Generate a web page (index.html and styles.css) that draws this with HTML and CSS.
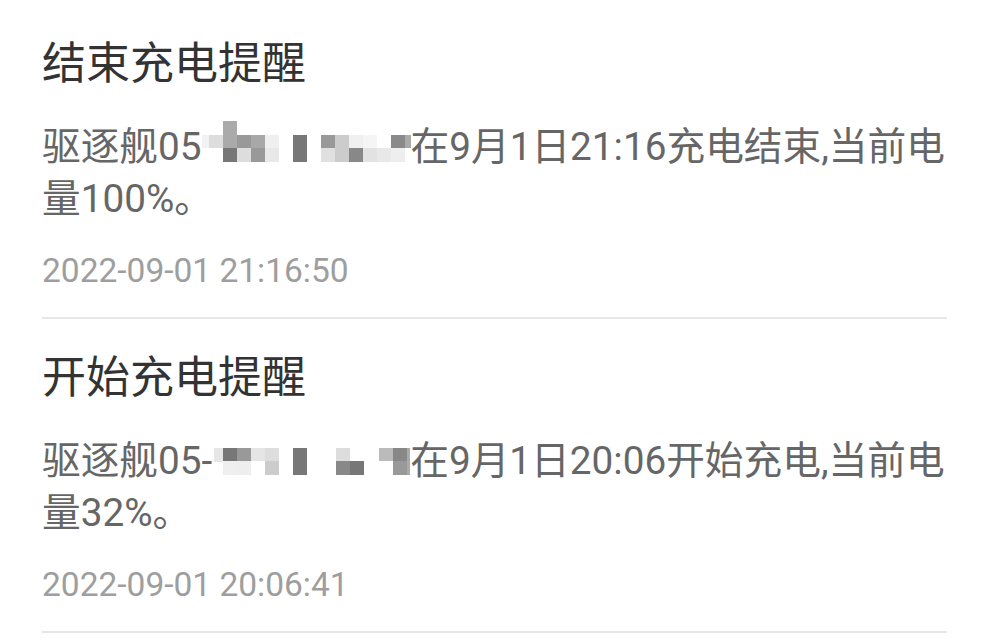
FILE: index.html
```html
<!DOCTYPE html>
<html lang="zh-CN">
<head>
<meta charset="utf-8">
<title>消息</title>
<link rel="stylesheet" href="styles.css">
</head>
<body>
<ul class="list">
  <li class="item">
    <div class="title">结束充电提醒</div>
    <div class="body">驱逐舰05<svg class="mosaic m1" width="209" height="52" viewBox="0 0 209 52" aria-hidden="true">
        <rect x="21" y="0" width="14" height="14" fill="#aaaaaa"/>
        <rect x="0" y="14" width="7" height="13" fill="#f2f2f2"/>
        <rect x="7" y="14" width="14" height="13" fill="#dddddd"/>
        <rect x="21" y="14" width="14" height="13" fill="#aaaaaa"/>
        <rect x="35" y="14" width="14" height="13" fill="#999999"/>
        <rect x="49" y="14" width="14" height="13" fill="#a8a8a8"/>
        <rect x="63" y="14" width="14" height="13" fill="#efefef"/>
        <rect x="91" y="14" width="14" height="13" fill="#777777"/>
        <rect x="119" y="14" width="14" height="13" fill="#999999"/>
        <rect x="133" y="14" width="14" height="13" fill="#cccccc"/>
        <rect x="147" y="14" width="14" height="13" fill="#f0f0f0"/>
        <rect x="161" y="14" width="14" height="13" fill="#f5f5f5"/>
        <rect x="189" y="14" width="14" height="13" fill="#8a8a8a"/>
        <rect x="203" y="14" width="6" height="13" fill="#aaaaaa"/>
        <rect x="21" y="27" width="14" height="14" fill="#777777"/>
        <rect x="35" y="27" width="14" height="14" fill="#dddddd"/>
        <rect x="49" y="27" width="14" height="14" fill="#999999"/>
        <rect x="63" y="27" width="14" height="14" fill="#e8e8e8"/>
        <rect x="91" y="27" width="14" height="14" fill="#777777"/>
        <rect x="119" y="27" width="14" height="14" fill="#e0e0e0"/>
        <rect x="133" y="27" width="14" height="14" fill="#cccccc"/>
        <rect x="147" y="27" width="14" height="14" fill="#888888"/>
        <rect x="161" y="27" width="14" height="14" fill="#e2e2e2"/>
        <rect x="175" y="27" width="14" height="14" fill="#e8e8e8"/>
        <rect x="189" y="27" width="14" height="14" fill="#eeeeee"/>
      </svg>在9月1日21:16充电结束,当前电量100%。</div>
    <div class="time">2022-09-01 21:16:50</div>
  </li>
  <li class="item">
    <div class="title">开始充电提醒</div>
    <div class="body">驱逐舰05-<svg class="mosaic m2" width="198" height="52" viewBox="0 0 198 52" aria-hidden="true">
        <rect x="2" y="13" width="9" height="14" fill="#e6e6e6"/>
        <rect x="11" y="13" width="14" height="13" fill="#777777"/>
        <rect x="25" y="13" width="14" height="13" fill="#999999"/>
        <rect x="39" y="13" width="14" height="13" fill="#e5e5e5"/>
        <rect x="53" y="13" width="14" height="13" fill="#dddddd"/>
        <rect x="81" y="13" width="14" height="13" fill="#777777"/>
        <rect x="124" y="13" width="14" height="13" fill="#dddddd"/>
        <rect x="167" y="13" width="14" height="13" fill="#bbbbbb"/>
        <rect x="181" y="13" width="14" height="13" fill="#888888"/>
        <rect x="195" y="13" width="3" height="13" fill="#aaaaaa"/>
        <rect x="11" y="26" width="14" height="14" fill="#efefef"/>
        <rect x="25" y="26" width="14" height="14" fill="#eeeeee"/>
        <rect x="53" y="26" width="14" height="14" fill="#cccccc"/>
        <rect x="81" y="26" width="14" height="14" fill="#777777"/>
        <rect x="124" y="26" width="14" height="14" fill="#888888"/>
        <rect x="138" y="26" width="14" height="14" fill="#777777"/>
        <rect x="181" y="26" width="14" height="14" fill="#999999"/>
        <rect x="195" y="26" width="3" height="14" fill="#aaaaaa"/>
      </svg>在9月1日20:06开始充电,当前电量32%。</div>
    <div class="time">2022-09-01 20:06:41</div>
  </li>
</ul>
</body>
</html>
```

FILE: styles.css
```css
html, body {
  margin: 0;
  padding: 0;
  background: #ffffff;
}

body {
  font-family: Roboto, "Noto Sans CJK SC", sans-serif;
}

.list {
  list-style: none;
  margin: 0;
  padding: 5px 41px 0 42px;
}

.item {
  padding: 29px 0 26px;
  border-bottom: 2px solid #e6e6e6;
}

.title {
  font-size: 44px;
  line-height: 60px;
  color: #333333;
}

.body {
  margin-top: 27px;
  margin-right: -8px;
  font-size: 38.7px;
  line-height: 52px;
  color: #666666;
}

.mosaic {
  display: inline-block;
  vertical-align: top;
}

.time {
  margin-top: 26px;
  font-size: 33.5px;
  line-height: 40px;
  color: #9e9e9e;
}
```
